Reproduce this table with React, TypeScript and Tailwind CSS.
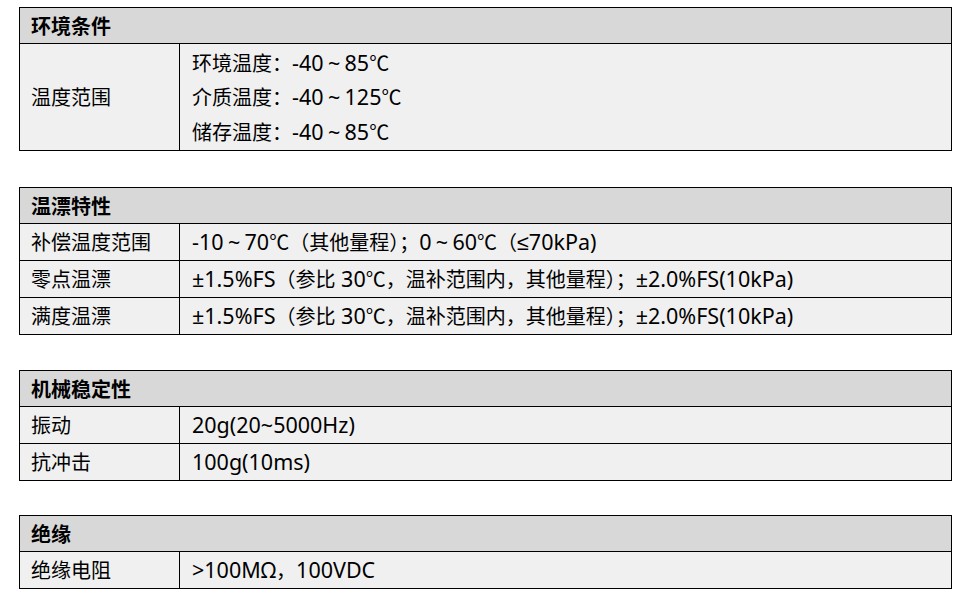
import React from "react";

const font = { fontFamily: '"Noto Sans CJK SC", "Noto Sans", sans-serif' };

function T({ s }: { s: string }) {
  const parts = s.match(/～|[\u2103\u3000-\u9fff\uff00-\uff5d\uff5f-\uffef]+|[^\u2103\u3000-\u9fff\uff00-\uffef]+/g) || [];
  return (
    <>
      {parts.map((p, i) =>
        p === "～" ? (
          <span key={i} className="inline-block w-[21px] text-center text-[21.5px]" style={{ fontFamily: '"Noto Sans", sans-serif' }}>
            ~
          </span>
        ) : /[\u2103\u3000-\u9fff\uff00-\uffef]/.test(p) ? (
          <span key={i}>{p}</span>
        ) : (
          <span key={i} className="text-[21.5px]" style={{ fontFamily: '"Noto Sans", sans-serif' }}>
            {p}
          </span>
        )
      )}
    </>
  );
}

function Header({ title }: { title: string }) {
  return (
    <div className="h-[36px] flex items-center px-[11px] bg-[#d8d8d8] border-b border-black font-bold">
      {title}
    </div>
  );
}

function Row({ label, value, last }: { label: string; value: string; last?: boolean }) {
  return (
    <div className={`flex bg-[#f0f0f0] ${last ? "h-[36px]" : "h-[37px] border-b border-black"}`}>
      <div className="w-[160px] shrink-0 border-r border-black flex items-center px-[11px]">{label}</div>
      <div className="flex-1 flex items-center px-[12px] whitespace-pre">
        <T s={value} />
      </div>
    </div>
  );
}

export default function App() {
  return (
    <div className="w-[970px] h-[592px] bg-white text-black text-[20px] leading-none pl-[19px] pr-[18px] pt-[7px]" style={font}>
      <div className="border border-black">
        <Header title="环境条件" />
        <div className="flex h-[106px] bg-[#f0f0f0]">
          <div className="w-[160px] shrink-0 border-r border-black flex items-center px-[11px]">温度范围</div>
          <div className="flex-1 flex flex-col justify-center px-[12px] gap-[13px] whitespace-pre">
            <div><T s="环境温度：-40～85℃" /></div>
            <div><T s="介质温度：-40～125℃" /></div>
            <div><T s="储存温度：-40～85℃" /></div>
          </div>
        </div>
      </div>

      <div className="border border-black mt-[36px]">
        <Header title="温漂特性" />
        <Row label="补偿温度范围" value="-10～70℃（其他量程）；0～60℃（≤70kPa)" />
        <Row label="零点温漂" value="±1.5%FS（参比 30℃，温补范围内，其他量程）；±2.0%FS(10kPa)" />
        <Row label="满度温漂" value="±1.5%FS（参比 30℃，温补范围内，其他量程）；±2.0%FS(10kPa)" last />
      </div>

      <div className="border border-black mt-[35px]">
        <Header title="机械稳定性" />
        <Row label="振动" value="20g(20~5000Hz)" />
        <Row label="抗冲击" value="100g(10ms)" last />
      </div>

      <div className="border border-black mt-[34px]">
        <Header title="绝缘" />
        <Row label="绝缘电阻" value=">100MΩ，100VDC" last />
      </div>
    </div>
  );
}
